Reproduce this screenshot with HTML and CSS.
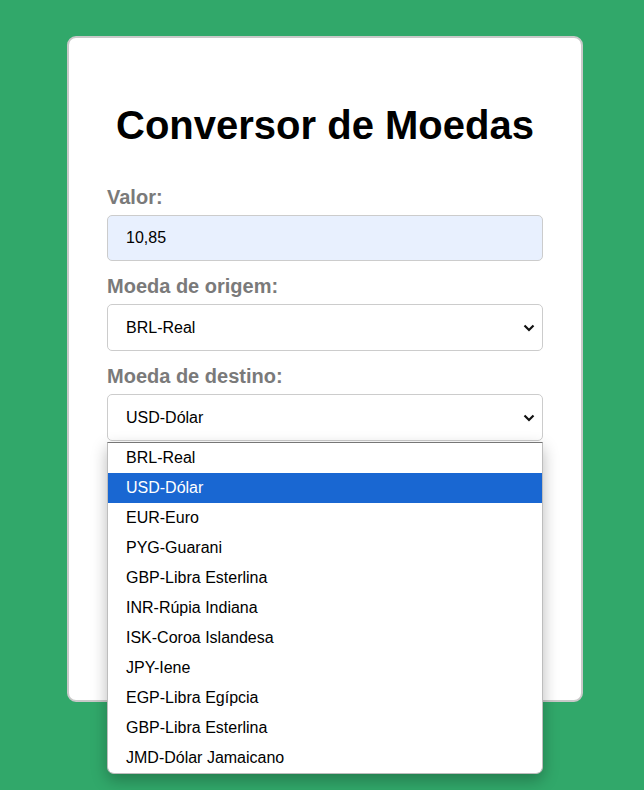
FILE: index.html
```html
<!DOCTYPE html>
<html lang="pt-BR">
<head>
<meta charset="utf-8">
<title>Conversor de Moedas</title>
<link rel="stylesheet" href="styles.css">
</head>
<body>
<main class="card">
  <h1 class="title">Conversor de Moedas</h1>
  <form class="form">
    <label class="label">Valor:</label>
    <div class="field field-filled">10,85</div>

    <label class="label">Moeda de origem:</label>
    <div class="field select">
      <span>BRL-Real</span>
      <svg class="chev" width="12" height="8" viewBox="0 0 12 8"><path d="M1.5 1.5 L6 6 L10.5 1.5" fill="none" stroke="#111" stroke-width="2.2"/></svg>
    </div>

    <label class="label">Moeda de destino:</label>
    <div class="select-wrap">
      <div class="field select">
        <span>USD-Dólar</span>
        <svg class="chev" width="12" height="8" viewBox="0 0 12 8"><path d="M1.5 1.5 L6 6 L10.5 1.5" fill="none" stroke="#111" stroke-width="2.2"/></svg>
      </div>
      <ul class="dropdown">
        <li>BRL-Real</li>
        <li class="active">USD-Dólar</li>
        <li>EUR-Euro</li>
        <li>PYG-Guarani</li>
        <li>GBP-Libra Esterlina</li>
        <li>INR-Rúpia Indiana</li>
        <li>ISK-Coroa Islandesa</li>
        <li>JPY-Iene</li>
        <li>EGP-Libra Egípcia</li>
        <li>GBP-Libra Esterlina</li>
        <li>JMD-Dólar Jamaicano</li>
      </ul>
    </div>
  </form>
</main>
</body>
</html>
```

FILE: styles.css
```css
html, body {
  margin: 0;
  padding: 0;
}
body {
  background: #31a86a;
  font-family: "Liberation Sans", Arial, sans-serif;
  min-height: 790px;
  padding-top: 36px;
  box-sizing: border-box;
}
.card {
  box-sizing: border-box;
  width: 516px;
  height: 666px;
  margin-left: 67px;
  background: #fff;
  border: 2px solid #c9c9c9;
  border-radius: 9px;
  padding: 57px 38px 0 38px;
}
.title {
  margin: 0;
  text-align: center;
  font-size: 40px;
  font-weight: bold;
  color: #000;
  line-height: 60px;
}
.form {
  display: flex;
  flex-direction: column;
  margin-top: 30px;
}
.label {
  font-size: 20px;
  font-weight: bold;
  color: #7a7a7a;
  line-height: 24px;
  margin-bottom: 6px;
}
.field {
  box-sizing: border-box;
  height: 47px;
  border: 1px solid #cccccc;
  border-radius: 5px;
  padding: 0 18px;
  display: flex;
  align-items: center;
  font-size: 16px;
  color: #000;
  background: #fff;
  margin-bottom: 13px;
}
.field-filled {
  background: #e8f0fe;
  height: 46px;
}
.select {
  justify-content: space-between;
  padding-right: 7px;
}
.select-wrap {
  position: relative;
}
.select-wrap .select {
  margin-bottom: 0;
}
.chev {
  display: block;
}
.dropdown {
  position: absolute;
  top: 48px;
  left: 0;
  right: 0;
  margin: 0;
  padding: 0;
  list-style: none;
  background: #fff;
  border: 1px solid #bdbdbd;
  border-top-color: #767676;
  border-radius: 0 0 7px 7px;
  box-shadow: 0 6px 16px rgba(0, 0, 0, 0.28);
  overflow: hidden;
}
.dropdown li {
  height: 30px;
  line-height: 30px;
  padding-left: 18px;
  font-size: 16px;
  color: #000;
}
.dropdown li.active {
  background: #1967d2;
  color: #fff;
}
```
